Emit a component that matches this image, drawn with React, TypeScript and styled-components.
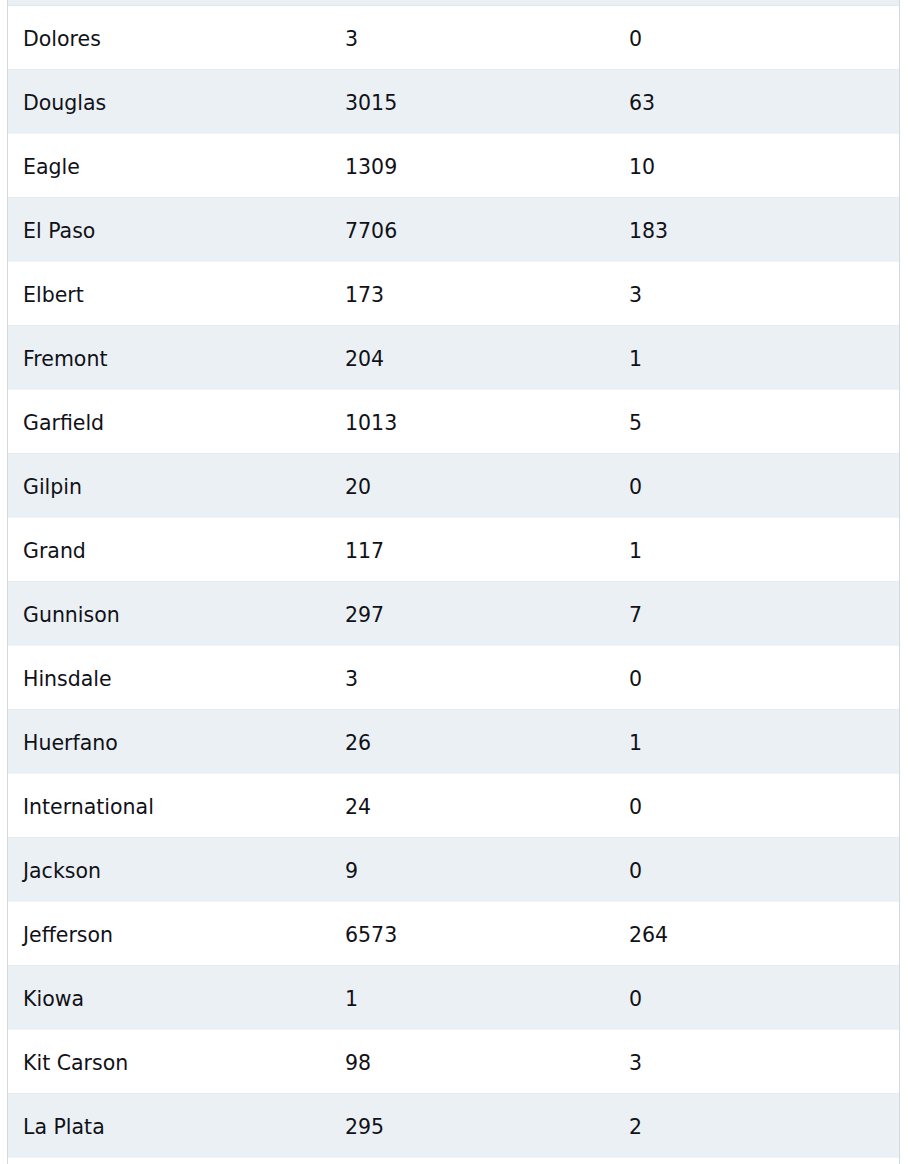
import React from 'react';
import styled, {createGlobalStyle} from 'styled-components';

const rows: [string, number, number][] = [
  ['Dolores', 3, 0],
  ['Douglas', 3015, 63],
  ['Eagle', 1309, 10],
  ['El Paso', 7706, 183],
  ['Elbert', 173, 3],
  ['Fremont', 204, 1],
  ['Garfield', 1013, 5],
  ['Gilpin', 20, 0],
  ['Grand', 117, 1],
  ['Gunnison', 297, 7],
  ['Hinsdale', 3, 0],
  ['Huerfano', 26, 1],
  ['International', 24, 0],
  ['Jackson', 9, 0],
  ['Jefferson', 6573, 264],
  ['Kiowa', 1, 0],
  ['Kit Carson', 98, 3],
  ['La Plata', 295, 2],
];

const App = () => {
  return (
    <>
      <GlobalStyle />
      <Table>
        <TopEdge />
        {rows.map(([county, cases, deaths], i) => (
          <Row key={county} striped={i % 2 === 1}>
            <Cell>{county}</Cell>
            <Cell>{cases}</Cell>
            <Cell>{deaths}</Cell>
          </Row>
        ))}
      </Table>
    </>
  );
};

export default App;

const GlobalStyle = createGlobalStyle`
  html, body {
    margin: 0;
    padding: 0;
    background: #ffffff;
    overflow: hidden;
  }
  body {
    padding: 0 8px 0 7px;
    font-family: "DejaVu Sans", "Liberation Sans", sans-serif;
  }
`;

const Table = styled.div`
  display: flex;
  flex-direction: column;
  width: 893px;
  min-height: 1200px;
  border-left: 1px solid #d4d8dc;
  border-right: 1px solid #d4d8dc;
  box-sizing: border-box;
`;

const TopEdge = styled.div`
  height: 5px;
  background: #eaeff3;
  border-bottom: 1px solid #e2e7eb;
`;

const Row = styled.div<{striped: boolean}>`
  display: grid;
  grid-template-columns: 322px 284px 1fr;
  align-items: center;
  height: 64px;
  box-sizing: border-box;
  background: ${p => (p.striped ? '#ebf0f4' : '#ffffff')};
  border-bottom: 1px solid ${p => (p.striped ? '#f2f5f7' : '#e6ebef')};
`;

const Cell = styled.div`
  padding: 3px 15px 0;
  font-size: 20.5px;
  color: #111118;
  line-height: 24px;
`;
